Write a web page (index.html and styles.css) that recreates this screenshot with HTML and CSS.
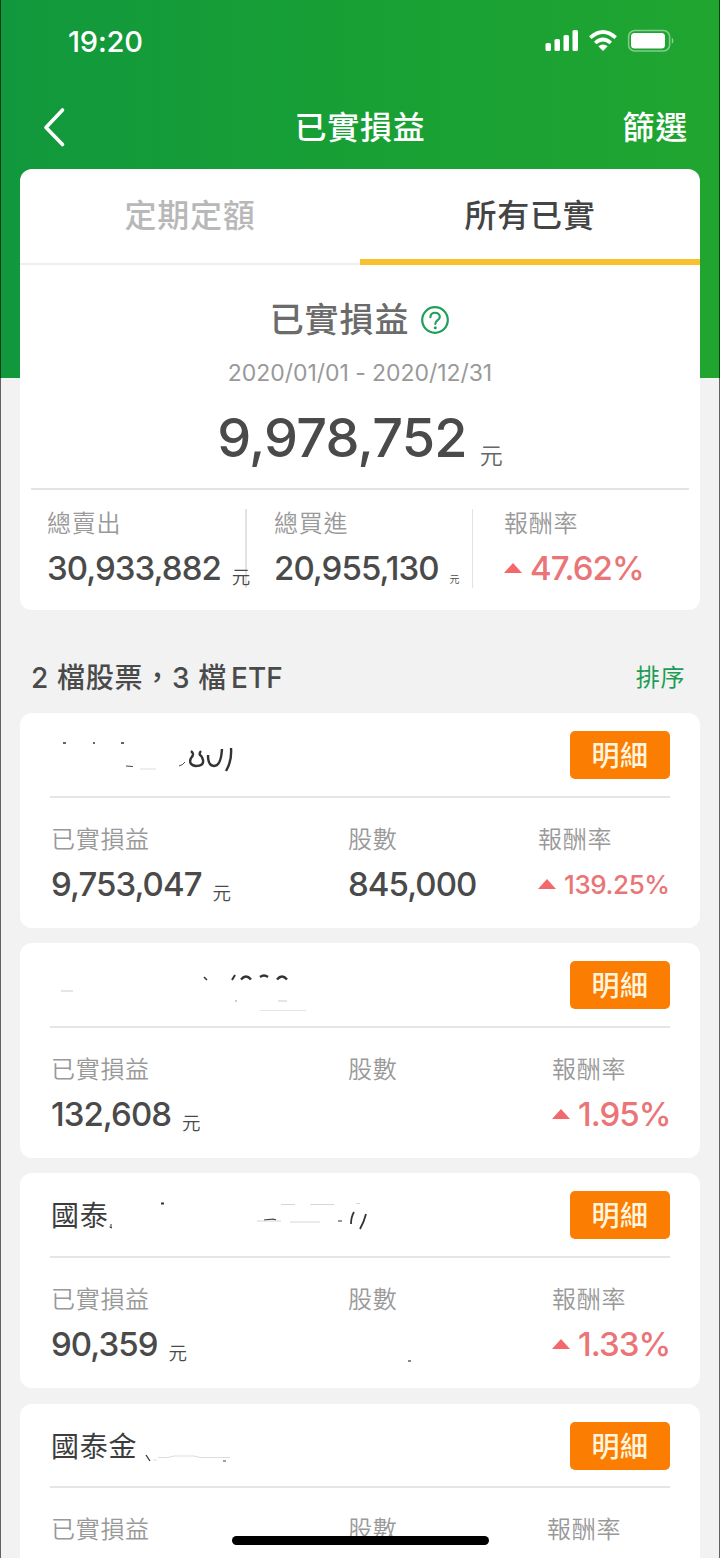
FILE: index.html
```html
<!DOCTYPE html>
<html lang="zh-Hant">
<head>
    <meta charset="UTF-8">
    <meta name="viewport" content="width=device-width, initial-scale=1.0">
    <title>已實損益</title>
    <link rel="stylesheet" href="styles.css">
</head>
<body>
    <div class="page">
        <div class="status-bar">
            <span class="time">19:20</span>
            <svg class="status-icons" width="130" height="24" viewBox="0 0 130 24">
                <g fill="#fff">
                    <rect x="1.5" y="14" width="5.5" height="8" rx="1.6"/>
                    <rect x="10.5" y="10" width="5.5" height="12" rx="1.6"/>
                    <rect x="19.5" y="6" width="5.5" height="16" rx="1.6"/>
                    <rect x="28.5" y="1" width="5.5" height="21" rx="1.6"/>
                    <path d="M59 22 L54.3 17.3 Q59 13.6 63.700 17.3 Z"/>
                    <rect x="87" y="4" width="34" height="15.500" rx="3.500"/>
                </g>
                <g fill="none" stroke="#fff" stroke-width="3.6">
                    <path d="M46.300 8.700 Q59 -2.700 71.700 8.700"/>
                    <path d="M51.200 14 Q59 7 66.800 14"/>
                </g>
                <rect x="84.600" y="1.600" width="41" height="20.300" rx="6" fill="none" stroke="#fff" stroke-opacity="0.45" stroke-width="1.500"/>
                <path d="M127.800 8.500 Q131 11.500 127.800 15 Z" fill="#fff" fill-opacity="0.5"/>
            </svg>
        </div>

        <div class="nav-bar">
            <svg class="back-icon" width="24" height="42" viewBox="0 0 24 42">
                <path d="M20.500 3 L4 20.500 L20.500 37.500" fill="none" stroke="#fff" stroke-width="3.600" stroke-linecap="round" stroke-linejoin="round"/>
            </svg>
            <h1>已實損益</h1>
            <a class="filter">篩選</a>
        </div>

        <div class="summary">
            <div class="tabs">
                <div class="tab">定期定額</div>
                <div class="tab active">所有已實</div>
            </div>
            <div class="summary-title">
                <span>已實損益</span>
                <svg width="30" height="30" viewBox="0 0 30 30" fill="none" stroke="#229f57">
                    <circle cx="15" cy="15" r="12.800" stroke-width="2.200"/>
                    <path d="M10.400 12.200 C10.400 6.300 19.800 6.300 19.800 11.900 C19.800 15.500 15.300 15 15.300 19" stroke-width="2.200" stroke-linecap="round"/>
                    <circle cx="15.300" cy="22.700" r="1.500" fill="#229f57" stroke="none"/>
                </svg>
            </div>
            <div class="date-range">2020/01/01 - 2020/12/31</div>
            <div class="total">9,978,752<span class="unit">元</span></div>
            <div class="stats">
                <div class="stat">
                    <div class="label">總賣出</div>
                    <div class="value">30,933,882<span class="unit">元</span></div>
                </div>
                <div class="stat buy">
                    <div class="label">總買進</div>
                    <div class="value">20,955,130<span class="unit">元</span></div>
                </div>
                <div class="stat">
                    <div class="label">報酬率</div>
                    <div class="value rate"><i class="up"></i>47.62%</div>
                </div>
            </div>
        </div>

        <div class="list-header">
            <h2>2 檔股票，3 檔<span class="etf">ETF</span></h2>
            <a class="sort">排序</a>
        </div>

        <div class="card">
            <div class="card-top">
                <div class="name">
                    <svg class="scribble" width="330" height="50" viewBox="0 0 330 50" fill="none" stroke="#333">
                        <path d="M13 12 h3 M43 12 h2 M71 12 h3" stroke-width="1.400"/>
                        <path d="M76 35 l7 0.500 M129 35 q4 -1 6 -4" stroke-width="0.900"/>
                        <path d="M90 38 h16" stroke="#ddd"/>
                        <path d="M141 20 q4 3 0 7 q-3 7 5 8 q8 0 7 -6 q-1 -4 -3 -5 q-1 -2 1 -4" stroke-width="2.400"/>
                        <path d="M158 24 q0 11 6 11 q7 0 8 -17" stroke-width="2.400"/>
                        <path d="M181 17 q1 13 -5 23" stroke-width="2.400"/>
                    </svg>
                </div>
                <button class="detail">明細</button>
            </div>
            <div class="card-body">
                <div class="col profit">
                    <div class="label">已實損益</div>
                    <div class="value">9,753,047<span class="unit">元</span></div>
                </div>
                <div class="col shares">
                    <div class="label">股數</div>
                    <div class="value">845,000</div>
                </div>
                <div class="col return wide">
                    <div class="label">報酬率</div>
                    <div class="value rate small"><i class="up"></i>139.25%</div>
                </div>
            </div>
        </div>

        <div class="card">
            <div class="card-top">
                <div class="name">
                    <svg class="scribble" width="330" height="50" viewBox="0 0 330 50" fill="none" stroke="#333">
                        <path d="M154 16 l3 3" stroke-width="1.500"/>
                        <path d="M185 14 l-3 5" stroke-width="2"/>
                        <path d="M191 18.500 q5 -6 10 0 M210 16 q4 -3 8 0 M227 18.500 q5 -6 10 0" stroke-width="2.400"/>
                        <path d="M11 30 h12 M228 40 h9 M210 50 h46" stroke="#ddd" stroke-width="1.400"/>
                        <path d="M185 40 h2" stroke="#999"/>
                    </svg>
                </div>
                <button class="detail">明細</button>
            </div>
            <div class="card-body">
                <div class="col profit">
                    <div class="label">已實損益</div>
                    <div class="value">132,608<span class="unit">元</span></div>
                </div>
                <div class="col shares">
                    <div class="label">股數</div>
                </div>
                <div class="col return">
                    <div class="label">報酬率</div>
                    <div class="value rate"><i class="up"></i>1.95%</div>
                </div>
            </div>
        </div>

        <div class="card">
            <div class="card-top">
                <div class="name">國泰
                    <svg class="scribble" width="330" height="50" viewBox="0 0 330 50" fill="none" stroke="#333">
                        <path d="M61 33 v4 M59.500 36 l2.500 1" stroke-width="1"/>
                        <path d="M111 12.500 h3" stroke-width="2"/>
                        <path d="M214 29 l9 -1 3 1 M288 30 h4" stroke-width="1.200"/>
                        <path d="M207 30 h24 M240 31 h30 M231 13.500 h14 M260 13.500 h24 M306 12.500 h4" stroke="#ccc" stroke-width="0.800"/>
                        <path d="M304 21 q-3 5 -3 12 M316 23 q-2 8 -6 15" stroke-width="1.800"/>
                    </svg>
                </div>
                <button class="detail">明細</button>
            </div>
            <div class="card-body">
                <div class="col profit">
                    <div class="label">已實損益</div>
                    <div class="value">90,359<span class="unit">元</span></div>
                </div>
                <div class="col shares">
                    <div class="label">股數</div>
                    <i class="dot"></i>
                </div>
                <div class="col return">
                    <div class="label">報酬率</div>
                    <div class="value rate"><i class="up"></i>1.33%</div>
                </div>
            </div>
        </div>

        <div class="card">
            <div class="card-top">
                <div class="name">國泰金
                    <svg class="scribble" width="330" height="50" viewBox="0 0 330 50" fill="none" stroke="#333">
                        <path d="M96 33 l4 6" stroke-width="1.300"/>
                        <path d="M103 38 h4 M108 35.500 h10 l6 -1.500 h20 l6 1.500 h30" stroke="#ddd" stroke-width="1.200"/>
                        <path d="M173 39 h3" stroke="#777" stroke-width="1.400"/>
                    </svg>
                </div>
                <button class="detail">明細</button>
            </div>
            <div class="card-body">
                <div class="col profit">
                    <div class="label">已實損益</div>
                </div>
                <div class="col shares">
                    <div class="label">股數</div>
                </div>
                <div class="col return last">
                    <div class="label">報酬率</div>
                </div>
            </div>
        </div>

        <div class="home-indicator"></div>
    </div>
</body>
</html>
```
FILE: styles.css
```css
* {
    box-sizing: border-box;
}
body {
    margin: 0;
    font-family: Inter, "Noto Sans CJK TC", sans-serif;
    color: #4a4a4a;
}
.page {
    position: relative;
    width: 720px;
    height: 1558px;
    overflow: hidden;
    padding: 0 19px;
    border: solid rgba(0, 0, 0, 0.6);
    border-width: 0 1px;
    background-color: #f2f2f2;
    background-image: linear-gradient(90deg, #11983d 0%, #18a035 50%, #20a530 100%);
    background-size: 100% 378px;
    background-repeat: no-repeat;
    background-origin: border-box;
}
.status-bar {
    display: flex;
    justify-content: space-between;
    align-items: center;
    height: 82px;
    padding: 0 26px 0 48px;
    color: #fff;
}
.time {
    font-size: 29px;
    font-weight: 500;
    letter-spacing: -0.2px;
}
.nav-bar {
    display: grid;
    grid-template-columns: 1fr auto 1fr;
    align-items: center;
    height: 87px;
    padding: 5px 12px 0;
    color: #fff;
}
.back-icon {
    margin: 0 0 1px 10px;
}
.nav-bar h1,
.filter {
    margin: 0;
    font-size: 32px;
    line-height: 40px;
    font-weight: 500;
    letter-spacing: 0.8px;
}
.filter {
    justify-self: end;
}
.summary {
    height: 441px;
    border-radius: 12px;
    background: #fff;
    overflow: hidden;
}
.tabs {
    display: flex;
    height: 96px;
}
.tab {
    flex: 1;
    border-bottom: 2px solid #eee;
    text-align: center;
    font-size: 32px;
    line-height: 93px;
    letter-spacing: 0.8px;
    color: #b8b8b8;
    font-weight: 500;
}
.tab.active {
    color: #444;
    border-bottom: 6px solid #f9c22c;
}
.summary-title {
    display: flex;
    justify-content: center;
    align-items: center;
    gap: 11px;
    margin-top: 27px;
    height: 56px;
    font-size: 34px;
    line-height: 56px;
    letter-spacing: 0.9px;
    color: #6b6b6b;
    font-weight: 500;
}
.date-range {
    margin-top: 8px;
    text-align: center;
    font-size: 23px;
    line-height: 34px;
    letter-spacing: -0.05px;
    color: #999;
}
.total {
    height: 80px;
    margin-top: 18px;
    text-align: center;
    font-size: 54px;
    line-height: 60px;
    letter-spacing: -0.8px;
    font-weight: 500;
}
.unit {
    display: inline-block;
    font-weight: 350;
    line-height: 1;
    letter-spacing: 0;
}
.total .unit {
    margin-left: 13px;
    font-size: 23px;
    vertical-align: -7px;
    color: #666;
}
.stats {
    display: grid;
    grid-template-columns: 216px 226px 1fr;
    margin: 0 11px;
    border-top: 2px solid #e3e3e3;
    padding-top: 19px;
}
.stat {
    height: 79px;
    border-right: 2px solid #e3e3e3;
    padding-left: 16px;
    white-space: nowrap;
}
.stat.buy {
    border-right-width: 1px;
    padding-left: 27px;
}
.stat:last-child {
    border-right: 0;
    padding-left: 31px;
}
.label {
    font-size: 24px;
    line-height: 30px;
    letter-spacing: 0.7px;
    font-weight: 350;
    color: #999;
}
.value {
    margin-top: 10px;
    height: 38px;
    font-size: 33px;
    line-height: 38px;
    letter-spacing: -0.95px;
    font-weight: 500;
    white-space: nowrap;
}
.value .unit {
    margin-left: 11px;
    font-size: 18.5px;
    vertical-align: -4px;
}
.stat.buy .unit {
    font-size: 10px;
    vertical-align: -3px;
}
.rate {
    display: flex;
    align-items: center;
    color: #ea7476;
}
.up {
    width: 0;
    height: 0;
    margin-right: 8px;
    border: solid transparent;
    border-width: 0 9px 10px;
    border-bottom-color: #f2686b;
}
.list-header {
    display: flex;
    justify-content: space-between;
    align-items: center;
    height: 103px;
    padding: 32px 15px 0 11px;
}
.list-header h2 {
    margin: 0;
    font-size: 28px;
    line-height: 40px;
    font-weight: 500;
    letter-spacing: 0.7px;
}
.etf {
    margin-left: 4px;
    letter-spacing: 0;
}
.sort {
    font-size: 24px;
    line-height: 40px;
    color: #1d9d54;
    letter-spacing: 0.6px;
}
.card {
    height: 215px;
    margin-bottom: 15.2px;
    padding: 0 30px;
    border-radius: 12px;
    background: #fff;
}
.card-top {
    display: flex;
    justify-content: space-between;
    height: 84.5px;
    padding-top: 18px;
    border-bottom: 2px solid #e6e6e6;
}
.name {
    position: relative;
    padding-left: 1px;
    font-size: 28px;
    line-height: 51px;
    letter-spacing: 0.8px;
    color: #3c3c3c;
}
.scribble {
    position: absolute;
    left: 0;
    top: 0;
}
.detail {
    width: 100px;
    height: 48px;
    border: 0;
    border-radius: 5px;
    background: #fb7e03;
    color: #fff5df;
    font-family: inherit;
    font-size: 28px;
    line-height: 48px;
    letter-spacing: 0.6px;
    font-weight: 500;
    padding: 1px 0 0;
}
.card-body {
    display: flex;
    padding: 27px 0 0 1px;
}
.profit {
    width: 297px;
}
.return {
    width: 118px;
    margin-left: auto;
}
.return.wide {
    width: 132px;
}
.return.last {
    width: 123px;
}
.rate.small {
    font-size: 26px;
    letter-spacing: -0.4px;
    padding-top: 3px;
}
.small .up {
    margin-bottom: 3px;
}
.dot {
    display: block;
    width: 3px;
    height: 2px;
    margin: 45px 0 0 60px;
    background: #888;
}
.home-indicator {
    position: absolute;
    left: 231px;
    bottom: 13px;
    width: 257px;
    height: 9px;
    border-radius: 5px;
    background: #000;
}
```
